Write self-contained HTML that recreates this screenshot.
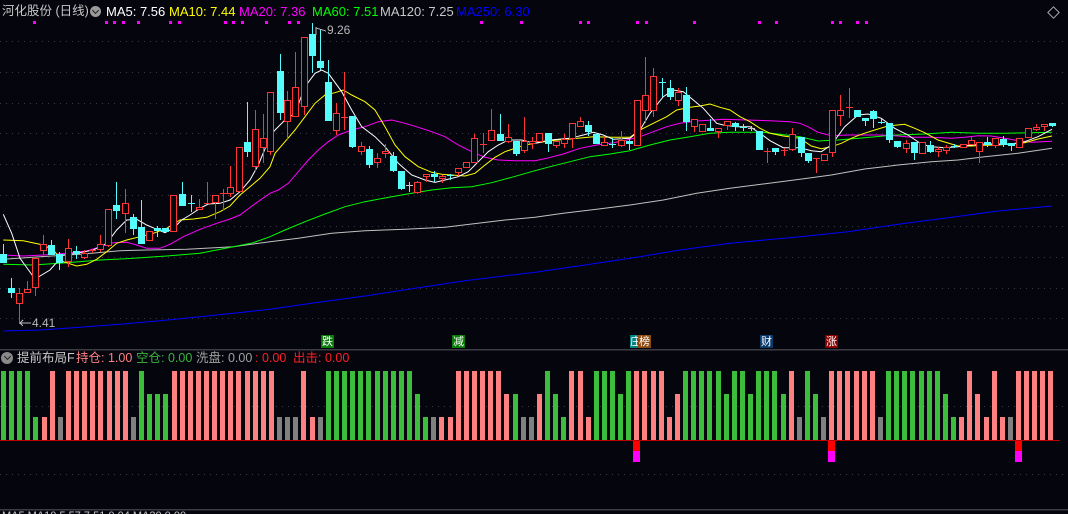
<!DOCTYPE html>
<html><head><meta charset="utf-8">
<style>
html,body{margin:0;padding:0;background:#05050e;overflow:hidden}
#w{position:relative;width:1068px;height:514px;background:#05050e;font-family:"Liberation Sans","Noto Sans CJK SC",sans-serif}
.t{position:absolute;white-space:nowrap;font-size:13px;line-height:15px}
.s{position:absolute;white-space:nowrap;font-size:12.5px;line-height:14px}
.lb{position:absolute;top:335px;height:13px;font-size:11px;line-height:13px;color:#fff;text-align:center;font-family:"Noto Sans CJK SC",sans-serif}
svg{position:absolute;left:0;top:0}
</style></head><body><div id="w">
<svg id="sv" width="1068" height="514" shape-rendering="crispEdges"></svg>
<div class="t" style="left:2px;top:4px;color:#c8c8c8;font-size:12.5px">河化股份 (日线)</div>
<div style="position:absolute;left:90px;top:6px;width:11px;height:11px;border-radius:50%;background:#9a9a9a"></div>
<div style="position:absolute;left:93px;top:8px;width:4px;height:4px;border-right:1.5px solid #222;border-bottom:1.5px solid #222;transform:rotate(45deg)"></div>
<div class="t" style="left:106px;top:4px;color:#fff">MA5: 7.56</div>
<div class="t" style="left:169px;top:4px;color:#ffff00">MA10: 7.44</div>
<div class="t" style="left:239px;top:4px;color:#ff00ff">MA20: 7.36</div>
<div class="t" style="left:312px;top:4px;color:#00ff00">MA60: 7.51</div>
<div class="t" style="left:380px;top:4px;color:#c8c8c8">MA120: 7.25</div>
<div class="t" style="left:456px;top:4px;color:#0000ff">MA250: 6.30</div>
<div style="position:absolute;left:1049px;top:8px;width:7px;height:7px;border:1px solid #aaa;transform:rotate(45deg)"></div>
<div class="t" style="left:327px;top:23px;color:#b8b8b8;font-size:12px">9.26</div>
<div class="t" style="left:32px;top:316px;color:#b8b8b8;font-size:12px">4.41</div>
<div class="lb" style="left:321px;width:13px;background:#0a7a0a">跌</div>
<div class="lb" style="left:452px;width:13px;background:#0a7a0a">减</div>
<div class="lb" style="left:630px;width:9px;background:#008080;overflow:hidden">庄</div>
<div class="lb" style="left:638px;width:13px;background:#8b4a10">榜</div>
<div class="lb" style="left:760px;width:13px;background:#0a3a6a">财</div>
<div class="lb" style="left:825px;width:13px;background:#8a0000">涨</div>
<div style="position:absolute;left:1px;top:352px;width:12px;height:12px;border-radius:50%;background:#8a8a8a"></div>
<div style="position:absolute;left:4.5px;top:354px;width:4px;height:4px;border-right:1.5px solid #222;border-bottom:1.5px solid #222;transform:rotate(45deg)"></div>
<div class="s" style="left:17px;top:351px;color:#c8c8c8">提前布局F</div>
<div class="s" style="left:76px;top:351px;color:#ff8080">持仓: 1.00</div>
<div class="s" style="left:136px;top:351px;color:#3cb43c">空仓: 0.00</div>
<div class="s" style="left:196px;top:351px;color:#a0a0a0">洗盘: 0.00</div>
<div class="s" style="left:255px;top:351px;color:#ff2020">: 0.00</div>
<div class="s" style="left:293px;top:351px;color:#ff2020">出击: 0.00</div>
<div class="s" style="left:2px;top:509px;color:#c8c8c8;font-size:11px">MA5 MA10 5.57 7.51 0.04 MA20 0.00</div>
</div>
<script>
var NS="http://www.w3.org/2000/svg",sv=document.getElementById("sv");
function el(n,a){var e=document.createElementNS(NS,n);for(var k in a)e.setAttribute(k,a[k]);sv.appendChild(e);return e;}
[41,72,103,133,164,195,226,257,288,318].forEach(function(y){el("line",{x1:0,x2:1068,y1:y+.5,y2:y+.5,stroke:"#3a3a46","stroke-dasharray":"1 5"});});
[406,474].forEach(function(y){el("line",{x1:0,x2:1068,y1:y+.5,y2:y+.5,stroke:"#3a3a46","stroke-dasharray":"1 5"});});
el("rect",{x:0,y:349,width:1068,height:1.5,fill:"#3c3c44"});
el("rect",{x:0,y:509,width:1068,height:1.5,fill:"#3c3c44"});
[33,105,113,122,137,169,178,224,232,241,265,288,297,480,520,579,587,636,645,693,758,775,831,839,856,865].forEach(function(x){el("rect",{x:x,y:21,width:3,height:3,fill:"#ff00ff"});});
function L(col,segs){var pts=[];segs.forEach(function(s){var x0=s[0];for(var i=1;i<s.length;i++){pts.push((x0+s[i][0]/3).toFixed(1)+","+(20+s[i][1]/3).toFixed(1));}});el("polyline",{points:pts.join(" "),fill:"none",stroke:col,"stroke-width":1,"shape-rendering":"auto"});}
L("#0000ff",[[0,[10,933],[120,930],[240,922],[360,913],[480,902],[600,890],[700,880],[810,868]],[265,[150,848],[300,828],[450,805],[600,782],[810,757]],[530,[150,737],[300,715],[450,690],[600,670],[810,650]],[798,[150,635],[300,613],[450,593],[600,573],[762,558]]]);
L("#c0c0c0",[[0,[10,718],[120,710],[240,703],[360,692],[440,690],[560,688],[700,680],[810,665]],[265,[100,655],[200,640],[300,632],[420,628],[540,622],[620,612],[720,600],[810,592]],[530,[100,580],[200,568],[300,555],[400,540],[500,520],[600,505],[700,492],[810,478]],[798,[100,465],[200,447],[300,435],[400,425],[480,420],[560,410],[660,400],[762,385]]]);
L("#00ff00",[[0,[10,733],[100,735],[200,728],[300,720],[400,715],[500,708],[600,700],[700,680],[760,668],[810,650]],[265,[60,630],[120,605],[180,582],[240,560],[300,545],[380,530],[440,520],[500,510],[560,503],[620,500],[680,488],[740,472],[810,452]],[530,[60,440],[120,425],[180,410],[240,402],[300,392],[360,375],[420,360],[480,350],[540,340],[600,337],[700,337],[810,350]],[798,[60,363],[120,360],[200,353],[280,346],[380,342],[460,337],[540,340],[620,340],[700,338],[762,337]]]);
L("#ff00ff",[[0,[10,705],[70,708],[130,705],[200,700],[260,693],[300,680],[340,668],[380,667],[410,675],[440,685],[480,685],[510,673],[550,650],[600,628],[650,610],[690,597],[720,585],[760,555],[810,520]],[265,[40,510],[70,490],[100,455],[130,420],[160,390],[190,365],[220,345],[260,330],[300,320],[340,305],[380,300],[420,310],[460,322],[500,335],[540,350],[580,375],[620,395],[660,412],[700,420],[750,422],[810,422]],[530,[50,415],[100,402],[150,385],[200,375],[250,368],[290,360],[330,350],[370,335],[410,320],[450,310],[500,303],[550,300],[580,298],[650,300],[720,302],[780,305],[810,310]],[798,[30,320],[60,337],[100,347],[150,345],[200,345],[250,345],[300,348],[340,352],[400,352],[460,355],[500,352],[540,347],[580,348],[620,355],[660,362],[700,367],[762,364]]]);
L("#ffff00",[[0,[10,660],[70,662],[130,675],[160,690],[190,725],[230,738],[260,733],[290,718],[320,695],[350,670],[380,660],[420,650],[460,640],[500,625],[540,600],[580,597],[620,592],[660,575],[690,558],[720,525],[750,500],[780,475],[810,440]],[265,[30,400],[60,365],[90,330],[120,290],[150,250],[180,225],[210,218],[235,210],[260,225],[300,245],[330,270],[360,320],[390,375],[420,410],[460,440],[500,457],[530,463],[560,465],[600,468],[630,460],[660,435],[690,412],[720,395],[750,385],[780,375],[810,370]],[530,[60,362],[120,357],[190,350],[250,352],[300,352],[330,330],[370,310],[410,290],[440,270],[480,262],[510,258],[540,252],[570,262],[600,270],[630,290],[660,305],[690,325],[720,340],[760,348],[810,355]],[798,[40,378],[70,386],[100,380],[130,370],[160,355],[190,343],[230,330],[270,318],[320,313],[350,325],[380,338],[420,360],[460,372],[480,378],[520,378],[560,376],[600,375],[640,372],[680,368],[720,357],[762,348]]]);
L("#ffffff",[[0,[10,583],[35,640],[60,715],[105,777],[150,750],[190,705],[230,700],[280,690],[320,670],[350,630],[380,600],[410,598],[440,615],[470,628],[495,638],[520,625],[545,600],[570,585],[600,565],[625,552],[660,550],[690,540],[720,515],[750,480],[775,435],[810,350]],[265,[30,330],[60,300],[90,280],[120,200],[150,160],[170,150],[190,160],[230,215],[260,270],[290,320],[330,350],[360,380],[400,430],[440,465],[480,480],[510,487],[540,480],[580,470],[610,455],[640,425],[670,395],[700,375],[730,360],[770,360],[810,370]],[530,[60,360],[120,355],[160,345],[190,337],[220,345],[250,358],[300,355],[330,330],[360,280],[400,230],[430,210],[460,215],[490,240],[520,265],[560,310],[580,315],[620,320],[660,320],[690,340],[720,362],[760,383],[810,383]],[798,[40,392],[70,395],[100,375],[140,320],[180,285],[210,282],[250,295],[290,325],[330,345],[370,372],[400,380],[440,383],[480,380],[520,375],[560,372],[600,372],[640,372],[680,365],[720,350],[762,328]]]);
var Z=[[0,[[10,'c',703,730,672,730],[34,'c',803,818,775,833],[58,'r',818,853,805,912],[82,'r',808,818,783,818],[106,'r',715,805,715,828],[130,'r',673,692,645,705],[154,'c',675,705,660,705],[178,'c',703,730,695,750],[204,'r',683,727,657,740],[228,'c',693,703,677,717],[252,'r',700,715,690,717],[276,'r',690,697,688,700],[300,'r',673,690,645,697],[324,'r',568,677,568,680],[348,'c',555,572,487,597],[376,'r',550,583,507,640],[400,'c',590,627,582,645],[424,'c',622,672,540,672],[448,'r',632,662,632,662],[472,'c',623,632,617,652],[496,'c',625,637,625,637],[520,'r',525,637,525,637],[546,'c',522,558,487,558],[572,'c',548,552,525,575],[596,'r',560,570,538,570],[620,'r',550,553,487,553],[644,'r',525,550,525,597],[668,'r',518,522,508,570],[690,'r',502,522,437,530],[716,'r',382,515,382,515],[742,'c',367,397,245,410],[766,'r',328,440,270,452],[790,'r',355,385,282,430]]],
[265,[[15,'r',217,395,217,405],[45,'c',153,280,102,300],[67,'r',240,305,213,360],[90,'r',202,290,97,290],[118,'r',50,262,50,285],[142,'c',42,107,10,160],[166,'c',123,143,27,150],[190,'c',187,302,120,302],[214,'r',280,332,250,345],[238,'r',290,296,157,330],[262,'c',288,380,288,385],[288,'r',377,395,365,405],[312,'c',387,435,377,443],[336,'r',415,430,400,445],[360,'r',392,402,373,415],[384,'c',408,453,397,455],[408,'c',453,507,453,510],[432,'x',496,498,487,517],[456,'r',487,520,483,522],[484,'r',463,472,463,487],[508,'c',462,470,452,487],[532,'r',468,478,465,490],[556,'c',466,468,462,480],[580,'r',445,458,445,467],[604,'r',425,445,425,445],[628,'r',355,430,342,430],[654,'r',372,376,340,398],[678,'r',330,362,267,362],[704,'c',342,362,283,362],[728,'r',352,367,313,370],[752,'c',363,402,363,407],[776,'r',362,392,292,398],[800,'r',362,372,352,388]]],
[530,[[28,'r',340,367,340,367],[55,'c',340,372,340,395],[79,'r',362,377,362,383],[103,'r',358,372,342,385],[127,'r',310,357,310,383],[151,'r',304,320,292,322],[175,'c',315,337,303,347],[199,'c',342,372,342,372],[223,'r',367,377,350,377],[247,'c',371,373,355,385],[273,'r',360,378,333,380],[297,'c',362,372,355,390],[321,'r',240,377,240,377],[346,'r',225,272,110,310],[370,'r',168,272,145,290],[396,'c',187,189,173,232],[420,'c',205,230,180,240],[444,'r',215,242,205,258],[468,'c',225,305,202,333],[492,'r',298,320,298,335],[516,'r',313,335,313,335],[540,'c',323,332,297,332],[564,'r',325,337,325,353],[592,'r',304,317,304,330],[616,'c',310,322,305,332],[640,'c',321,323,313,332],[664,'x',324,326,318,332],[688,'c',333,390,333,390],[712,'r',393,400,383,428],[736,'c',383,395,383,405],[762,'r',390,397,385,407],[786,'r',343,390,323,392]]],
[798,[[8,'c',350,398,350,410],[31,'c',400,422,400,428],[55,'r',414,418,415,460],[79,'r',402,422,402,422],[103,'r',270,400,270,410],[127,'r',270,287,225,317],[154,'r',260,266,205,295],[178,'c',270,292,270,292],[202,'c',293,302,293,317],[226,'c',273,297,270,325],[250,'c',306,308,297,312],[274,'c',310,360,310,370],[298,'c',363,380,363,383],[325,'r',370,386,360,398],[349,'c',366,398,366,420],[373,'r',367,402,367,402],[397,'c',376,396,363,398],[421,'r',388,396,380,412],[445,'r',382,392,375,403],[469,'c',377,379,372,385],[495,'r',373,383,373,383],[519,'r',360,376,350,376],[543,'r',367,395,367,428],[567,'c',367,375,350,380],[591,'r',353,378,353,383],[615,'c',357,374,348,380],[640,'c',370,378,370,392],[664,'r',355,385,355,385],[690,'r',325,355,325,355],[714,'r',320,330,313,332],[738,'r',313,320,313,333],[762,'c',310,317,310,322]]]];
var R="#ff3535",C="#54fcfc",G="#c8c8c8";
Z.forEach(function(z){var x0=z[0];z[1].forEach(function(c){
 var cx=Math.round(x0+c[0]/3),bt=Math.round(20+c[2]/3),bb=Math.round(20+c[3]/3),wt=Math.round(20+c[4]/3),wb=Math.round(20+c[5]/3);
 var col=c[1]=='r'?R:(c[1]=='c'?C:G);
 el("rect",{x:cx,y:wt,width:1,height:Math.max(1,wb-wt),fill:col});
 if(bb-bt<=2){el("rect",{x:cx-3,y:bt,width:7,height:1,fill:col});}
 else if(c[1]=='r'){el("rect",{x:cx-2.5,y:bt+.5,width:6,height:bb-bt-1,fill:"#05050e",stroke:R,"stroke-width":1});}
 else{el("rect",{x:cx-3,y:bt,width:7,height:bb-bt,fill:col});}
});});
el("line",{x1:316,y1:27,x2:316,y2:35,stroke:"#bbb"});
el("line",{x1:316,y1:28,x2:326,y2:31,stroke:"#bbb"});
el("line",{x1:20,y1:323,x2:31,y2:323,stroke:"#bbb"});
el("line",{x1:20,y1:323,x2:23,y2:320,stroke:"#bbb"});
el("line",{x1:20,y1:323,x2:23,y2:326,stroke:"#bbb"});
var seq="AAAACFDgDDDDDDDDgABBBDDDDDDDDDDDDDgggDFgAAAAAAAAAAABCgFFDDDDDDEBggEABCDDFAAABADDDDFEAAAAABAABAAABDgABgDDDDDDgAAAAAAABCFDEFDFgDDDDD";
var TP={A:371,B:394,C:417,D:371,E:394,F:417,g:417},CL={A:"#3cbe3c",B:"#3cbe3c",C:"#3cbe3c",D:"#ff8080",E:"#ff8080",F:"#ff8080",g:"#808080"};
for(var i=0;i<seq.length;i++){var ch=seq[i],bx=Math.round(1+i*8.12);el("rect",{x:bx,y:TP[ch],width:5,height:440-TP[ch],fill:CL[ch]});}
el("rect",{x:0,y:440,width:1060,height:1,fill:"#c00000"});
[78,102,125].forEach(function(k){var bx=Math.round(1+k*8.12)-1;el("rect",{x:bx,y:441,width:7,height:10,fill:"#ff0000"});el("rect",{x:bx,y:451,width:7,height:11,fill:"#ff00ff"});});
</script>
</body></html>
